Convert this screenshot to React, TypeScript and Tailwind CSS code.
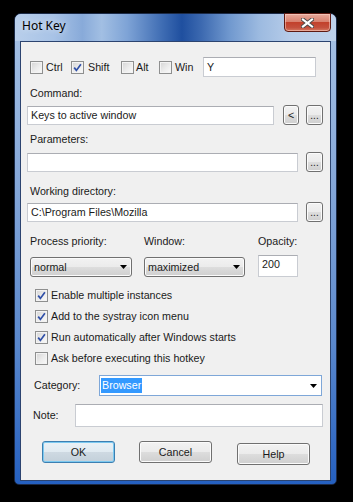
import React from "react";

const Check = ({ checked }: { checked?: boolean }) => (
  <span className="flex h-[13px] w-[13px] shrink-0 items-center justify-center border border-[#8e8f8f] bg-[linear-gradient(135deg,#d4d4d4_0%,#ececec_55%,#fafafa_100%)] shadow-[inset_0_0_0_1px_#f3f3f3]">
    {checked && (
      <svg width="11" height="11" viewBox="0 0 11 11">
        <path d="M2.2 5.6 L4.4 8.4 L8.9 2.2" fill="none" stroke="#3050a8" strokeWidth="1.7" />
      </svg>
    )}
  </span>
);

const Arrow = () => (
  <svg width="7" height="4" viewBox="0 0 7 4">
    <polygon points="0,0 7,0 3.5,4" fill="#000" />
  </svg>
);

const Btn = ({ children, className = "" }: { children: React.ReactNode; className?: string }) => (
  <div
    className={
      "flex shrink-0 items-center justify-center rounded-[3px] border border-[#707070] bg-[linear-gradient(#f2f2f2_0%,#ebebeb_50%,#dddddd_51%,#cfcfcf_100%)] shadow-[inset_0_0_0_1px_#fbfbfb] " +
      className
    }
  >
    {children}
  </div>
);

const Input = ({ value = "", className = "" }: { value?: string; className?: string }) => (
  <div
    className={
      "flex shrink-0 items-center border border-[#c9ccd2] border-t-[#abadb3] bg-white pl-[3px] " + className
    }
  >
    {value}
  </div>
);

const Select = ({ value, className = "" }: { value: string; className?: string }) => (
  <div
    className={
      "flex h-[20px] shrink-0 items-center justify-between rounded-[3px] border border-[#707070] bg-[linear-gradient(#f2f2f2_0%,#ebebeb_50%,#dddddd_51%,#cfcfcf_100%)] pl-[3px] pr-[4px] shadow-[inset_0_0_0_1px_#fbfbfb] " +
      className
    }
  >
    <span>{value}</span>
    <Arrow />
  </div>
);

export default function App() {
  return (
    <div className="h-[502px] w-[353px] overflow-hidden bg-black pl-[14px] pt-[13px] font-['Liberation_Sans',Arial,sans-serif] text-[10.7px] leading-[13px] text-[#1a1a1a]">
      <div className="flex h-[472px] w-[323px] flex-col rounded-t-[7px] rounded-b-[5px] border border-[#1b2a47] bg-[linear-gradient(180deg,#a9c4e6_0%,#86a8d9_35%,#5a88cd_70%,#2560c0_100%)]">
        <div className="flex h-[27px] shrink-0 items-start rounded-t-[6px] bg-[linear-gradient(90deg,#b9cfeb_0%,#a8c3e6_12%,#88aad9_21%,#a2bfe3_27%,#7ea3d6_35%,#3e6cb3_46%,#1f4f9f_52%,#3c69b0_58%,#7199cf_67%,#9cbae0_76%,#b6cce9_86%,#bed2eb_100%)]">
          <span className="ml-[7px] mt-[5px] font-['Noto_Sans',Arial,sans-serif] text-[12px] leading-[14px] text-black [text-shadow:0_0_6px_rgba(255,255,255,0.8)]">
            Hot Key
          </span>
          <div className="-mt-[1px] ml-auto mr-[5px] flex h-[19px] w-[47px] items-center justify-center rounded-b-[4px] border border-[#5e1a12] bg-[linear-gradient(#e8aa9c_0%,#d8816f_45%,#c2412c_50%,#c4503d_80%,#d57a62_100%)] shadow-[inset_0_0_0_1px_rgba(255,220,210,0.5)]">
            <svg width="13" height="10" viewBox="0 0 13 10">
              <path d="M2 1.5 L11 8.5 M11 1.5 L2 8.5" stroke="#4a4a4a" strokeWidth="4" strokeLinecap="square" />
              <path d="M2 1.5 L11 8.5 M11 1.5 L2 8.5" stroke="#fff" strokeWidth="2.2" strokeLinecap="square" />
            </svg>
          </div>
        </div>

        <div className="mx-[5px] flex h-[440px] flex-col border border-[#2c4470] bg-[#f0f0f0]">
          <div className="ml-[9px] mt-[15px] flex h-[20px] items-center">
            <div className="flex w-[41px] items-center">
              <Check />
              <span className="ml-[3px]">Ctrl</span>
            </div>
            <div className="flex w-[50px] items-center">
              <Check checked />
              <span className="ml-[4px]">Shift</span>
            </div>
            <div className="flex w-[38px] items-center">
              <Check />
              <span className="ml-[2px]">Alt</span>
            </div>
            <div className="flex w-[44px] items-center">
              <Check />
              <span className="ml-[3px]">Win</span>
            </div>
            <Input value="Y" className="h-[20px] w-[113px]" />
          </div>

          <div className="ml-[9px] mt-[10px] h-[13px]">Command:</div>
          <div className="ml-[6px] mt-[5px] flex h-[20px] items-center">
            <Input value="Keys to active window" className="h-[19px] w-[247px]" />
            <Btn className="ml-[9px] h-[20px] w-[16px]">&lt;</Btn>
            <Btn className="ml-[7px] h-[20px] w-[17px] text-[10px]">...</Btn>
          </div>

          <div className="ml-[9px] mt-[8px] h-[13px]">Parameters:</div>
          <div className="ml-[6px] mt-[6px] flex h-[20px] items-center">
            <Input className="h-[19px] w-[271px]" />
            <Btn className="ml-[8px] h-[20px] w-[17px] text-[10px]">...</Btn>
          </div>

          <div className="ml-[9px] mt-[13px] h-[13px]">Working directory:</div>
          <div className="ml-[6px] mt-[4px] flex h-[20px] items-center">
            <Input value="C:\Program Files\Mozilla" className="h-[19px] w-[271px]" />
            <Btn className="ml-[8px] h-[20px] w-[17px] text-[10px]">...</Btn>
          </div>

          <div className="ml-[9px] mt-[13px] flex h-[13px]">
            <span className="w-[114px]">Process priority:</span>
            <span className="w-[114px]">Window:</span>
            <span>Opacity:</span>
          </div>
          <div className="ml-[9px] mt-[7px] flex h-[22px] items-end">
            <Select value="normal" className="mr-[12px] w-[102px]" />
            <Select value="maximized" className="mr-[13px] w-[101px]" />
            <div className="flex h-[22px] w-[40px] items-start border border-[#c9ccd2] border-t-[#abadb3] bg-white pl-[3px] pt-[2px]">
              200
            </div>
          </div>

          <div className="mt-[8px] flex flex-col">
            {[
              ["Enable multiple instances", true],
              ["Add to the systray icon menu", true],
              ["Run automatically after Windows starts", true],
              ["Ask before executing this hotkey", false],
            ].map(([label, on]) => (
              <div key={label as string} className="ml-[14px] flex h-[21px] items-center">
                <Check checked={on as boolean} />
                <span className="ml-[3px]">{label as string}</span>
              </div>
            ))}
          </div>

          <div className="ml-[13px] mt-[6px] flex h-[21px] items-center">
            <span className="w-[65px]">Category:</span>
            <div className="flex h-[21px] w-[223px] items-center justify-between border border-[#7ea7d8] bg-white pl-[1px] pr-[4px]">
              <span className="bg-[#3399ff] px-[1px] leading-[15px] text-white">Browser</span>
              <Arrow />
            </div>
          </div>

          <div className="ml-[12px] mt-[8px] flex h-[23px] items-center">
            <span className="w-[42px]">Note:</span>
            <Input className="h-[23px] w-[248px]" />
          </div>

          <div className="ml-[21px] mt-[14px] flex items-start">
            <div className="flex h-[22px] w-[73px] items-center justify-center rounded-[3px] border border-[#3c7fb1] bg-[linear-gradient(#eaf1f6_0%,#e0eaf1_50%,#ced9e2_51%,#c3d0da_100%)] shadow-[inset_0_0_0_1px_#7cc9f0]">
              OK
            </div>
            <Btn className="ml-[24px] h-[22px] w-[73px]">Cancel</Btn>
            <Btn className="ml-[25px] mt-[2px] h-[22px] w-[73px]">Help</Btn>
          </div>
        </div>
      </div>
    </div>
  );
}
